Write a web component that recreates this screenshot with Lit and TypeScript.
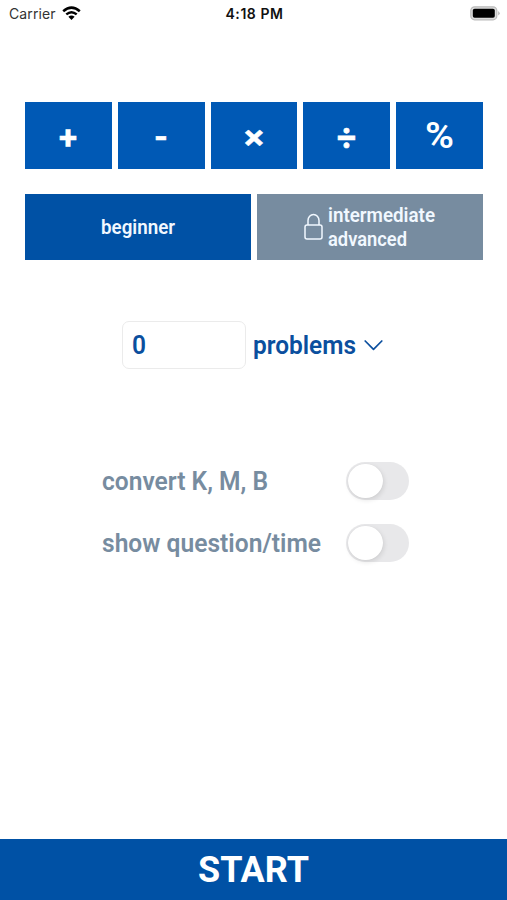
import { LitElement, html, css, svg } from "lit";
import { customElement, property } from "lit/decorators.js";

/** A single line of text set to an exact width, on a baseline inside its box. */
@customElement("fit-text")
class FitText extends LitElement {
  @property() text = "";
  @property({ type: Number }) width = 0;
  @property({ type: Number }) height = 30;
  @property({ type: Number }) baseline = 22;
  static styles = css`
    :host { display: block; flex: none; }
    svg { display: block; overflow: visible; }
    text { fill: currentColor; stroke: currentColor; stroke-width: var(--embolden, 0); }
  `;
  render() {
    return html`<svg width=${this.width} height=${this.height}>${svg`<text x="0" y=${this.baseline} textLength=${this.width} lengthAdjust="spacingAndGlyphs">${this.text}</text>`}</svg>`;
  }
}

@customElement("toggle-switch")
class ToggleSwitch extends LitElement {
  static styles = css`
    :host { display: block; width: 63px; height: 38px; border-radius: 19px; background: #e8e8ea; flex: none; box-sizing: border-box; padding: 1.5px 2px; }
    .knob { width: 34.5px; height: 34.5px; border-radius: 50%; background: #fff; box-shadow: 1px 2px 5px rgba(0,0,0,.11), 0 0 1px rgba(0,0,0,.08); }
  `;
  render() { return html`<div class="knob"></div>`; }
}

@customElement("app-root")
class AppRoot extends LitElement {
  static styles = css`
    :host { display: flex; flex-direction: column; height: 900px; background: #fff; font-family: Roboto, "Liberation Sans", sans-serif; overflow: hidden; }
    .status { display: grid; grid-template-columns: 1fr auto 1fr; align-items: center; height: 27px; padding: 0 7px 0 9px; color: #111; font-family: Inter, sans-serif; font-size: 14px; }
    .carrier { display: flex; align-items: center; gap: 6px; color: #333; letter-spacing: .1px; }
    .clock { font-weight: 600; letter-spacing: .55px; }
    .battery { justify-self: end; }
    svg { display: block; flex: none; }
    .ops { display: grid; grid-template-columns: repeat(5, 1fr); gap: 6px; margin: 75px 24px 0 25px; color: #fff; }
    .op { height: 66.5px; background: #0059b5; display: flex; justify-content: center; align-items: center; }
    .op fit-text { font-weight: 700; }
    .sign { font-size: 34px; --embolden: .5px; }
    .divide { font-size: 37px; --embolden: .7px; }
    .op .percent { font-size: 36px; font-weight: 600; }
    .levels { display: grid; grid-template-columns: 1fr 1fr; gap: 6px; margin: 25.5px 24.5px 0 25px; color: #f1f8ff; font-size: 19.5px; font-weight: 600; }
    .level { height: 66px; background: #0051a5; display: flex; justify-content: center; align-items: center; }
    .locked { background: #778ca0; gap: 5px; }
    .count { display: flex; align-items: center; margin: 61px 0 0 122px; color: #0b4f9e; font-size: 26px; font-weight: 600; }
    .field { box-sizing: border-box; width: 124px; height: 48px; border: 1px solid #ebebeb; border-radius: 7px; padding: 8px 9px; margin-right: 7px; }
    .count svg { margin-left: 8px; }
    .options { margin: 93px 98px 0 102px; display: grid; gap: 24px; color: #778ca0; font-size: 25px; font-weight: 600; }
    .option { display: flex; justify-content: space-between; align-items: center; }
    .start { margin-top: auto; height: 61px; display: flex; justify-content: center; background: #0051a5; color: #fff; font-size: 36.5px; font-weight: 700; }
  `;
  render() {
    return html`
      <div class="status">
        <div class="carrier"><span>Carrier</span>
          <svg width="19" height="15" viewBox="0 0 19 15" fill="none" stroke="#000" stroke-width="2.5">
            <path d="M1.2 5.3Q9.5-2 17.8 5.3M4.3 8.4Q9.5 4 14.7 8.4"/><path d="M9.5 14L6.4 10.8Q9.5 8.3 12.6 10.8Z" fill="#000" stroke="none"/>
          </svg>
        </div>
        <span class="clock">4:18 PM</span>
        <svg class="battery" width="30" height="15" viewBox="0 0 30 15">
          <rect x=".8" y=".8" width="26" height="13" rx="3.8" fill="#ddd" stroke="#bbb" stroke-width="1.2"/>
          <rect x="2.8" y="2.8" width="22" height="9" rx="1.8"/><path d="M28.3 5Q30.8 7.3 28.3 9.6Z" fill="#aaa"/>
        </svg>
      </div>
      <div class="ops">
        <div class="op"><fit-text class="sign" text="+" width="18" height="30" baseline="29"></fit-text></div>
        <div class="op"><fit-text class="sign" text="-" width="14" height="30" baseline="27.5"></fit-text></div>
        <div class="op"><fit-text class="sign" text="×" width="20" height="30" baseline="29"></fit-text></div>
        <div class="op"><fit-text class="divide" text="÷" width="19" height="30" baseline="30"></fit-text></div>
        <div class="op"><fit-text class="percent" text="%" width="29" height="30" baseline="27.5"></fit-text></div>
      </div>
      <div class="levels">
        <div class="level"><fit-text text="beginner" width="74" height="30" baseline="21.5"></fit-text></div>
        <div class="level locked">
          <svg width="19" height="28" viewBox="0 0 19 28" fill="none" stroke="#f1f8ff" stroke-width="1.5"><rect x="1" y="12" width="17" height="14" rx="2"/><path d="M4 12V7.5a5.5 6 0 0 1 11 0V12"/></svg>
          <div>
            <fit-text text="intermediate" width="107" height="24.5" baseline="19"></fit-text>
            <fit-text text="advanced" width="79" height="24.5" baseline="19"></fit-text>
          </div>
        </div>
      </div>
      <div class="count">
        <div class="field"><fit-text text="0" width="14" height="30" baseline="24"></fit-text></div>
        <fit-text text="problems" width="103" height="30" baseline="23.5"></fit-text>
        <svg width="19" height="12" viewBox="0 0 19 12" fill="none" stroke="#0b4f9e" stroke-width="1.7" stroke-linecap="round" stroke-linejoin="round"><path d="M1.2 2L9.5 10.3L17.8 2"/></svg>
      </div>
      <div class="options">
        <div class="option"><fit-text text="convert K, M, B" width="166" height="30" baseline="23.5"></fit-text><toggle-switch></toggle-switch></div>
        <div class="option"><fit-text text="show question/time" width="219" height="30" baseline="23.5"></fit-text><toggle-switch></toggle-switch></div>
      </div>
      <div class="start"><fit-text text="START" width="111" height="60" baseline="43"></fit-text></div>
    `;
  }
}
